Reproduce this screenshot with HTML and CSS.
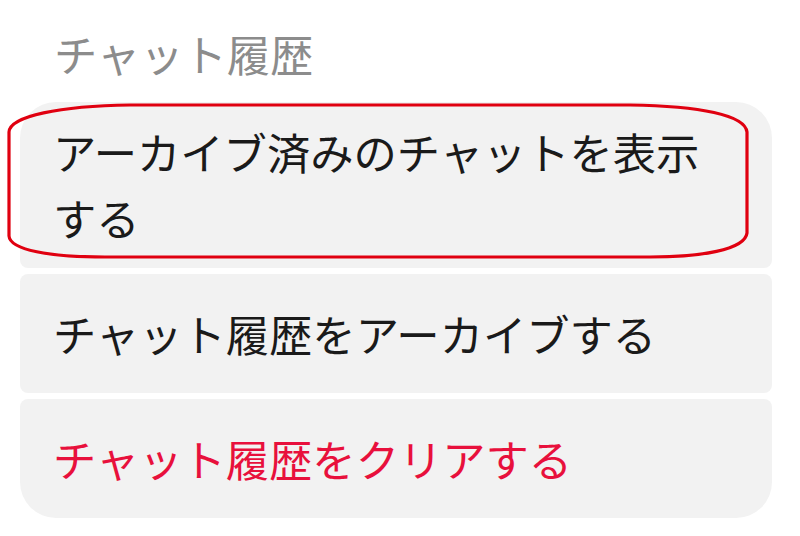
FILE: index.html
```html
<!DOCTYPE html>
<html lang="ja">
<head>
<meta charset="utf-8">
<link rel="stylesheet" href="styles.css">
</head>
<body>
<div class="page">
  <h2 class="title">チャット履歴</h2>
  <div class="card">
    <div class="row">アーカイブ済みのチャットを表示する</div>
    <div class="row">チャット履歴をアーカイブする</div>
    <div class="row danger">チャット履歴をクリアする</div>
  </div>
  <svg class="annot" width="800" height="536" viewBox="0 0 800 536">
    <path d="M130 105 L630 105 C700 106 745 115 747 132 L747 233 C745 250 700 257 650 257 L105 257 C50 257 10 250 9 236 L9 132 C10 116 60 106 130 105 Z" fill="none" stroke="#e00010" stroke-width="3.2" stroke-linejoin="round"/>
  </svg>
</div>
</body>
</html>
```
FILE: styles.css
```css
html, body {
  margin: 0;
  padding: 0;
  background: #ffffff;
}
.page {
  position: relative;
  width: 800px;
  height: 536px;
  overflow: hidden;
  font-family: "Noto Sans CJK JP", "Noto Sans", sans-serif;
}
.title {
  margin: 0;
  padding: 21px 0 0 54px;
  height: 64px;
  font-size: 43.3px;
  line-height: 64px;
  font-weight: 400;
  color: #8c8c8c;
}
.card {
  margin: 17px 28px 0 20px;
  display: flex;
  flex-direction: column;
  gap: 6px;
}
.row {
  box-sizing: border-box;
  min-height: 119px;
  padding: 16px 40px 18px 33px;
  display: flex;
  align-items: center;
  background: #f2f2f2;
  border-radius: 8px;
  font-size: 43.3px;
  line-height: 66px;
  color: #1a1a1a;
}
.row:first-child {
  border-top-left-radius: 36px;
  border-top-right-radius: 36px;
}
.row:last-child {
  border-bottom-left-radius: 36px;
  border-bottom-right-radius: 36px;
}
.danger {
  color: #e8103c;
}
.annot {
  position: absolute;
  left: 0;
  top: 0;
  pointer-events: none;
}
```
